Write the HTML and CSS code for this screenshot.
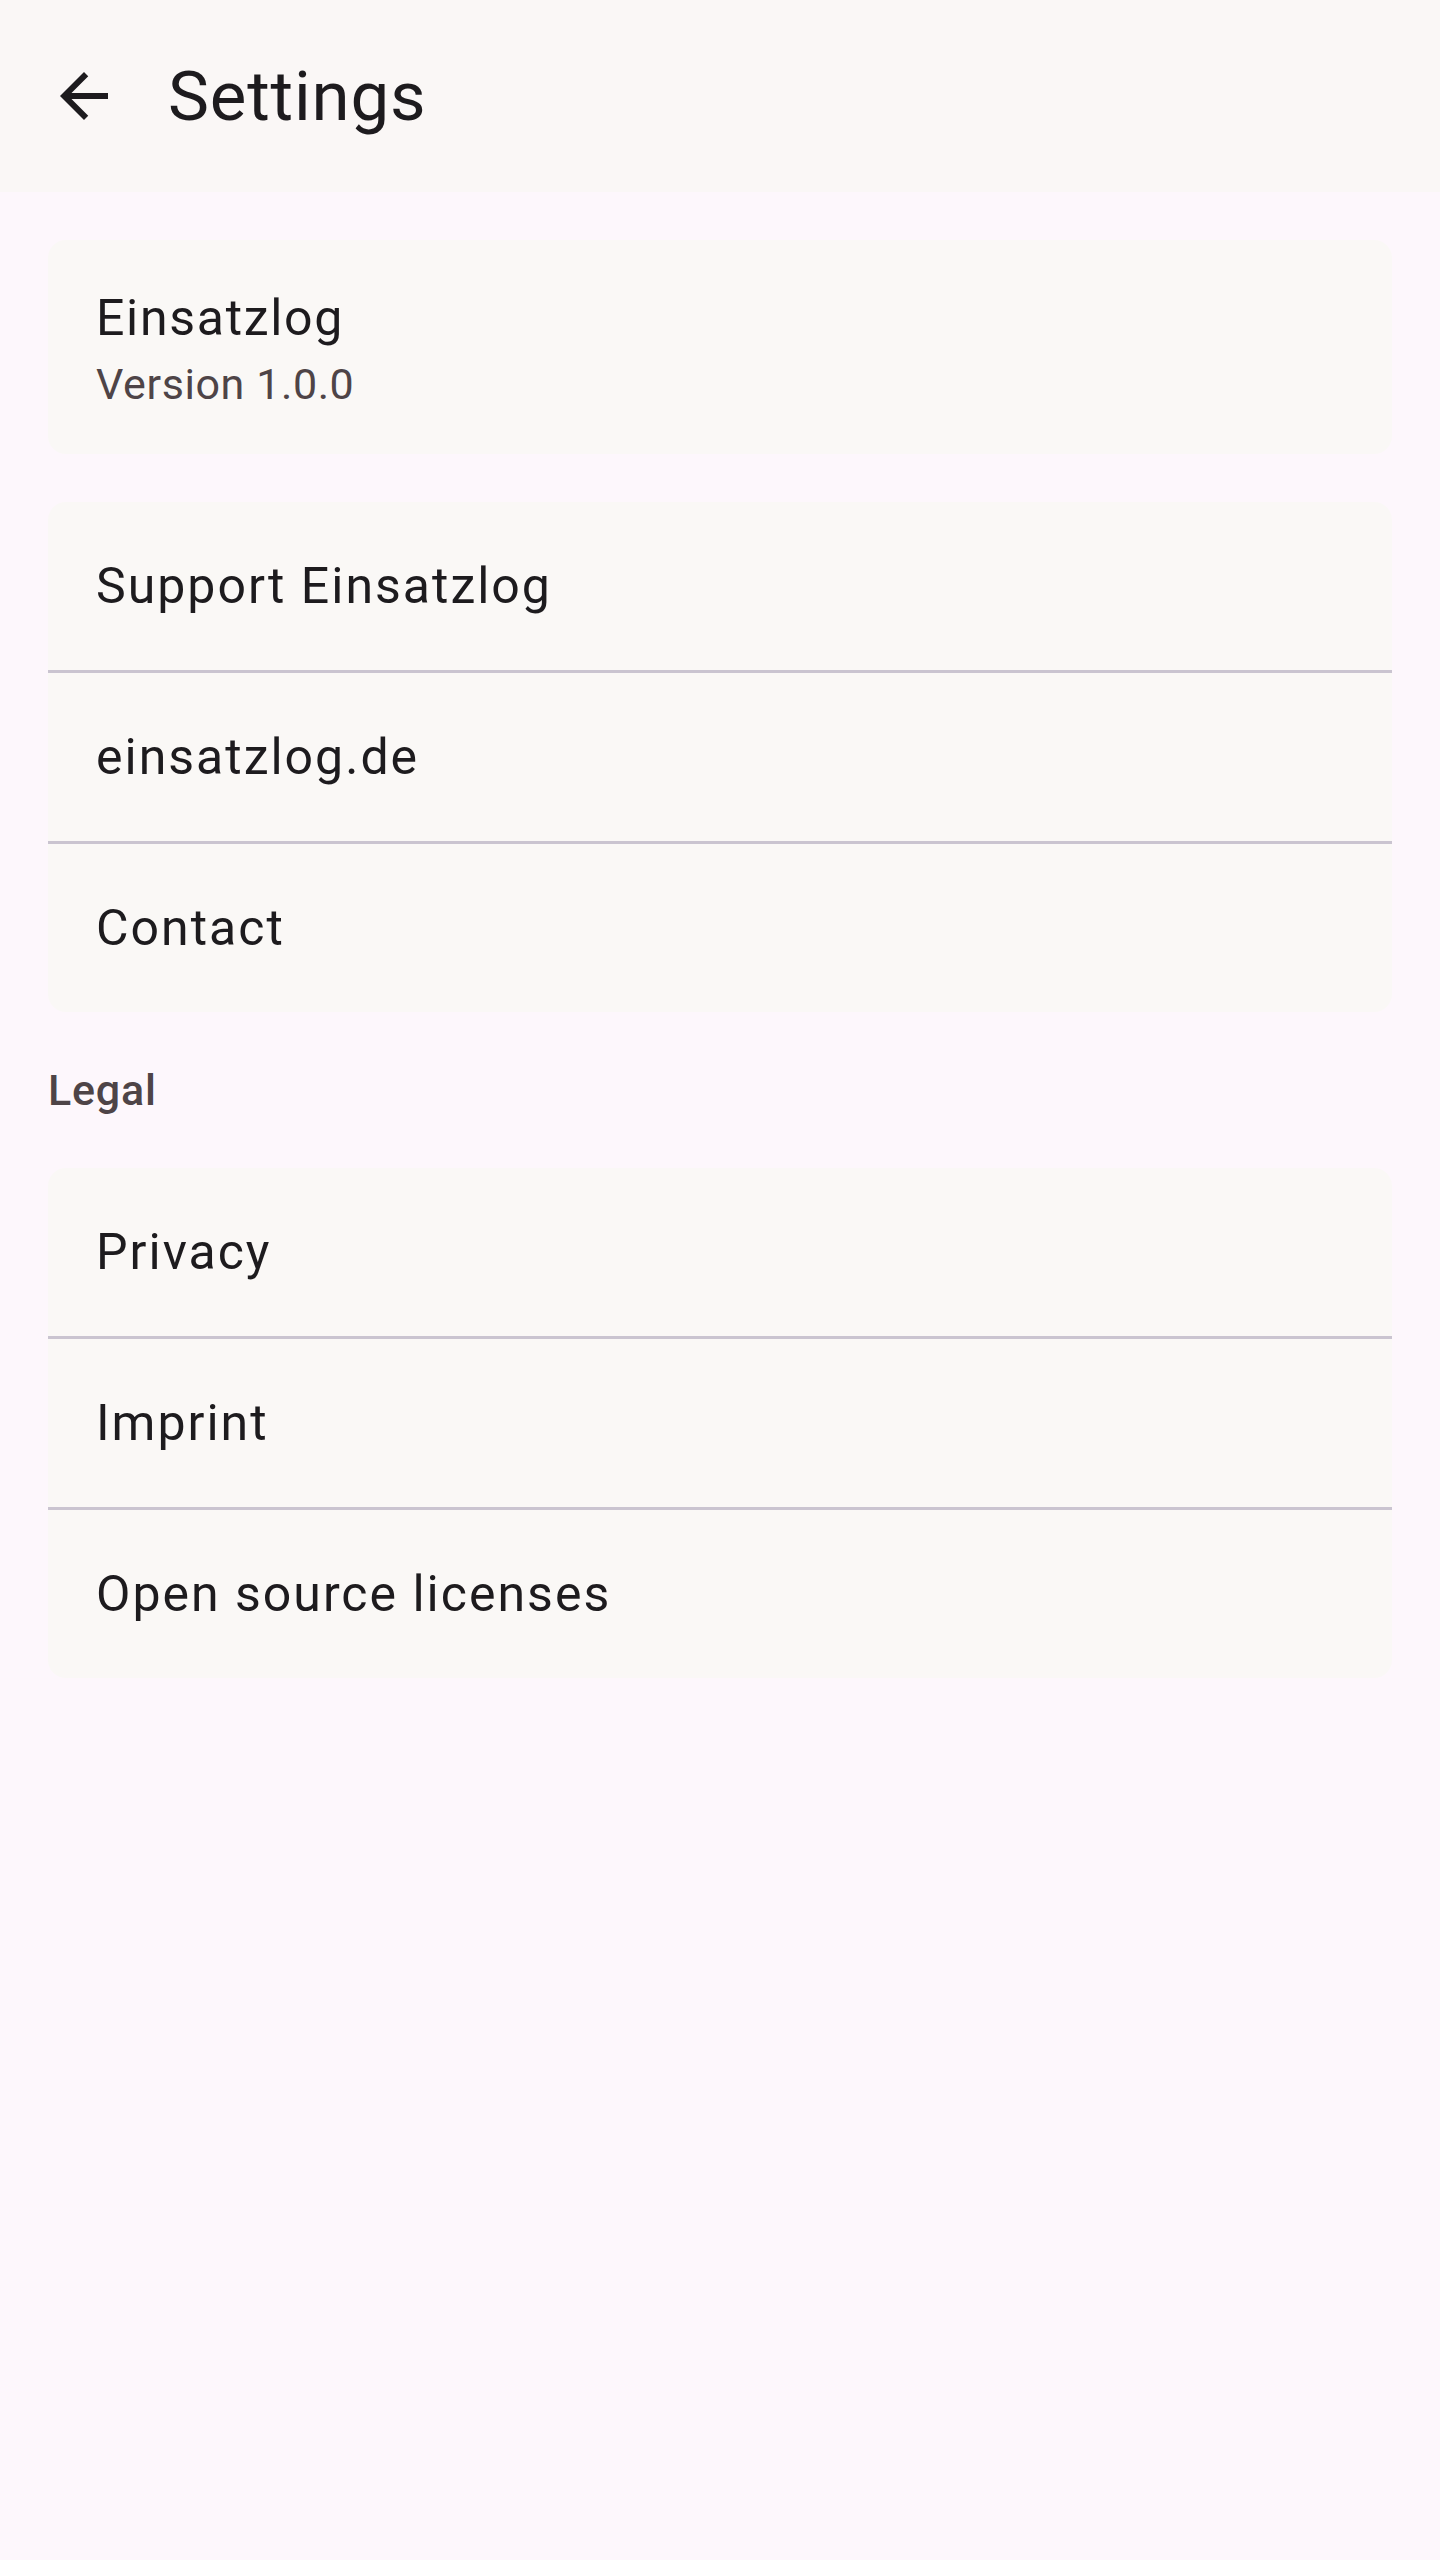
FILE: index.html
```html
<!DOCTYPE html>
<html lang="en">
<head>
  <meta charset="UTF-8">
  <meta name="viewport" content="width=device-width, initial-scale=1.0">
  <title>Settings</title>
  <link rel="stylesheet" href="styles.css">
</head>
<body>
  <header class="top-bar">
    <button class="back-button" aria-label="Back">
      <svg viewBox="0 0 24 24" width="72" height="72">
        <path d="M20 11H7.83l5.59-5.59L12 4l-8 8 8 8 1.41-1.41L7.83 13H20v-2z" fill="currentColor"/>
      </svg>
    </button>
    <h1>Settings</h1>
  </header>

  <main class="content">
    <!-- App info -->
    <section class="card about">
      <p class="app-name">Einsatzlog</p>
      <p class="app-version">Version 1.0.0</p>
    </section>

    <section class="card">
      <div class="row">Support Einsatzlog</div>
      <div class="row">einsatzlog.de</div>
      <div class="row">Contact</div>
    </section>

    <h2 class="section-title">Legal</h2>

    <section class="card">
      <div class="row">Privacy</div>
      <div class="row">Imprint</div>
      <div class="row">Open source licenses</div>
    </section>
  </main>
</body>
</html>
```

FILE: styles.css
```css
body {
  margin: 0;
  min-height: 2560px;
  background-color: #fdf7fc;
  font-family: Roboto, "Noto Sans", sans-serif;
  color: #1d1b1e;
}
.top-bar {
  display: flex;
  align-items: center;
  height: 192px;
  padding-left: 48px;
  background-color: #faf7f6;
}
.back-button {
  display: flex;
  align-items: center;
  justify-content: center;
  width: 72px;
  height: 72px;
  padding: 0;
  border: none;
  background: none;
  color: #1d1b1e;
}
.top-bar h1 {
  margin: 2px 0 0 48px;
  font-size: 69px;
  font-weight: 400;
  line-height: 84px;
  letter-spacing: 0.8px;
}
.content {
  display: flex;
  flex-direction: column;
  gap: 48px;
  padding: 48px;
}
.card {
  background-color: #faf8f6;
  border-radius: 18px;
  overflow: hidden;
}
.about {
  padding: 42px 48px 40px;
}
.about p {
  margin: 0;
}
.app-name {
  font-size: 50px;
  line-height: 72px;
  letter-spacing: 1.7px;
}
.app-version {
  font-size: 43px;
  line-height: 60px;
  letter-spacing: 0.6px;
  color: #4e4447;
}
.row {
  display: flex;
  align-items: center;
  height: 168px;
  padding: 0 48px;
  font-size: 50px;
  letter-spacing: 2px;
}
.row + .row {
  border-top: 3px solid #cac4d0;
}
.section-title {
  margin: 0;
  font-size: 43px;
  font-weight: 500;
  line-height: 60px;
  letter-spacing: 0.8px;
  color: #4e4447;
}
```
